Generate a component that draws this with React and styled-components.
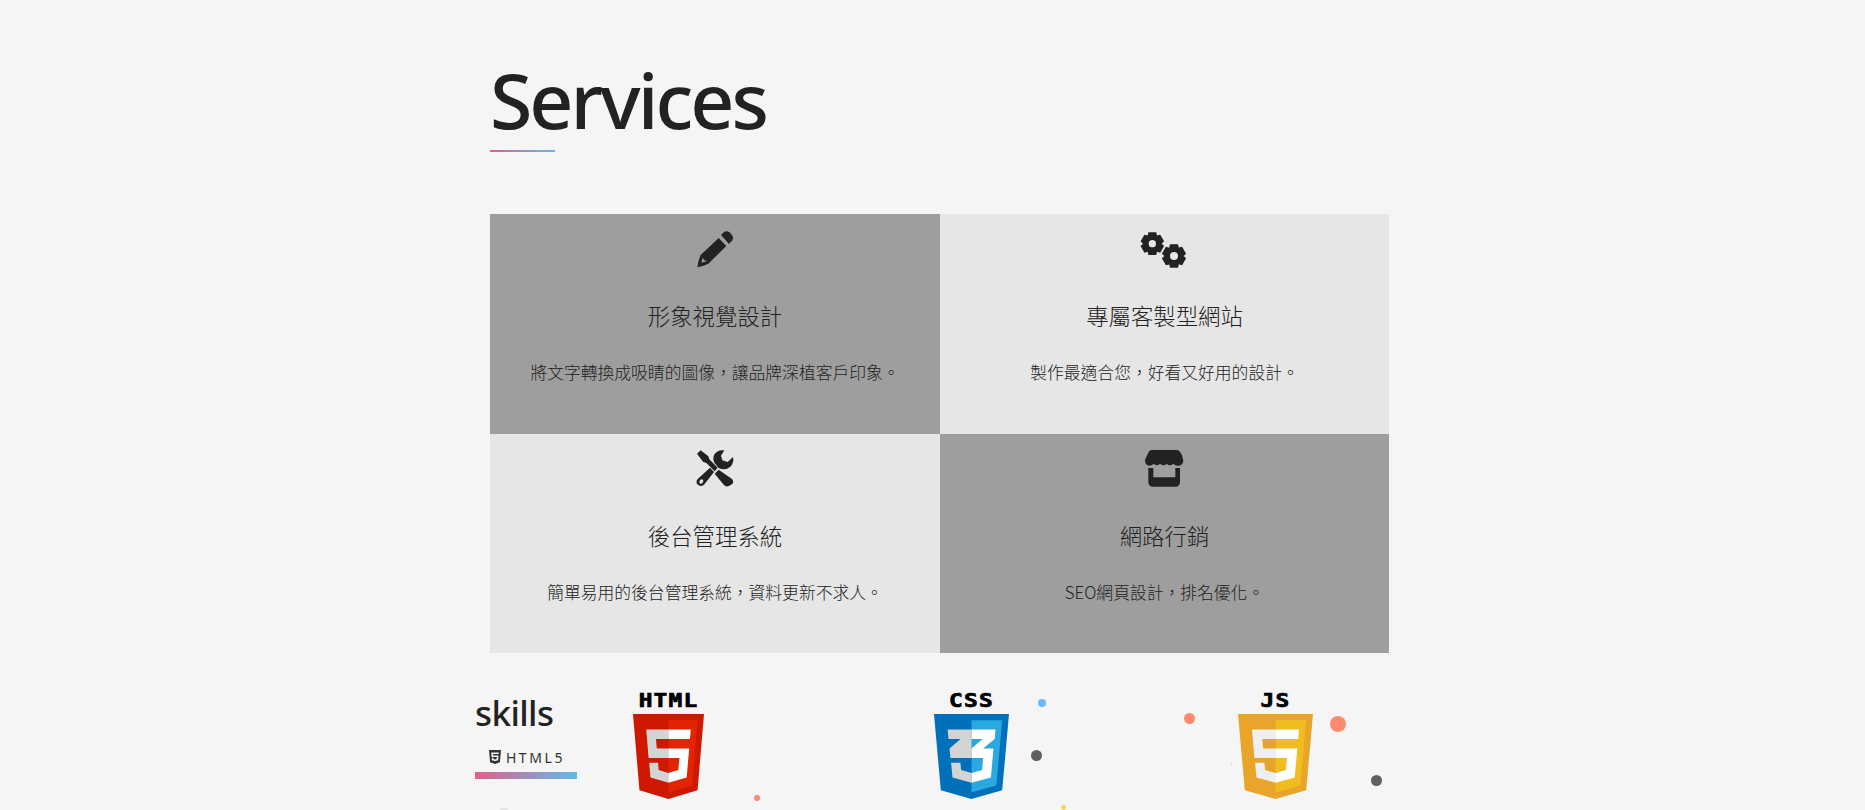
import React from "react";
import styled, { createGlobalStyle } from "styled-components";
import { FaHtml5 } from "react-icons/fa";

const Global = createGlobalStyle`
  html, body { margin: 0; padding: 0; height: 810px; overflow: hidden; background: #f5f5f5; }
  body { font-family: "Noto Sans", "Noto Sans CJK TC", sans-serif; color: #333; }
`;
const Page = styled.div`
  width: 899px;
  margin-left: 490px;
  padding-top: 55px;
`;
const Header = styled.header`
  height: 159px;
`;
const Title = styled.h1`
  margin: 0;
  font-family: "Noto Sans", sans-serif;
  font-weight: 500;
  font-size: 77px;
  letter-spacing: -3px;
  line-height: 90px;
  color: #222;
`;
const Underline = styled.div`
  width: 65px;
  height: 2px;
  margin-top: 5px;
  background: linear-gradient(90deg, #e05f8e, #60bbe6);
`;
const Grid = styled.section`
  display: grid;
  grid-template-columns: 450px 449px;
  grid-auto-rows: 219.5px;
`;
const Card = styled.article`
  display: flex;
  flex-direction: column;
  align-items: center;
  padding-top: 12px;
  box-sizing: border-box;
  background: ${(p) => (p.$dark ? "#9e9e9e" : "#e6e6e6")};
`;
const Icon = styled.svg`
  display: block;
  width: 60px;
  height: 45px;
  fill: #222;
`;
const CardTitle = styled.h3`
  margin: 28px 0 0;
  font-family: "Noto Sans CJK TC", sans-serif;
  font-weight: 300;
  font-size: 22.4px;
  line-height: 32px;
  color: #222;
`;
const CardText = styled.p`
  margin: 29px 0 0;
  font-family: "Noto Sans CJK TC", sans-serif;
  font-weight: 300;
  font-size: 16.8px;
  line-height: 24px;
  color: #222;
`;
const Skills = styled.section`
  position: relative;
  display: flex;
  align-items: flex-start;
  margin-left: -15px;
  padding-top: 40px;
  height: 116px;
  box-sizing: border-box;
`;
const Side = styled.div`
  width: 102px;
  margin-right: 56px;
`;
const SkillHead = styled.h2`
  margin: -3px 0 0 0;
  font-weight: 500;
  font-size: 35px;
  letter-spacing: -0.6px;
  line-height: 46px;
  color: #222;
`;
const TabLabel = styled.div`
  display: flex;
  align-items: center;
  justify-content: center;
  gap: 3px;
  margin-top: 11px;
  height: 20px;
  font-size: 14px;
  letter-spacing: 2.6px;
  color: #333;
`;
const TabBar = styled.div`
  height: 7px;
  margin-top: 5px;
  background: linear-gradient(90deg, #e05f8e, #60bbe6);
`;
const Logo = styled.div`
  width: ${(p) => p.$w}px;
  margin-right: ${(p) => p.$gap}px;
  flex: none;
`;
const LogoLabel = styled.div`
  height: 21px;
  text-align: center;
  font-family: "DejaVu Sans Mono", monospace;
  font-weight: 700;
  font-size: 19px;
  line-height: 15px;
  letter-spacing: 1px;
  color: #000;
  -webkit-text-stroke: 0.7px #000;
  transform: scaleX(1.2);
`;
const Shield = styled.svg`
  display: block;
  width: 100%;
  height: 85px;
`;
const Dot = styled.span`
  position: absolute;
  border-radius: 50%;
  left: ${(p) => p.$x - 475 - p.$r}px;
  top: ${(p) => p.$y - 653 - p.$r}px;
  width: ${(p) => p.$r * 2}px;
  height: ${(p) => p.$r * 2}px;
  background: ${(p) => p.$c};
`;

const gear = (cx, cy, R, r, hole) => {
  const pts = [];
  for (let i = 0; i < 6; i++) {
    const a = (i * Math.PI) / 3 - Math.PI / 2;
    const w = 0.33;
    const v = 0.52;
    pts.push([cx + R * Math.cos(a - w), cy + R * Math.sin(a - w)]);
    pts.push([cx + R * Math.cos(a + w), cy + R * Math.sin(a + w)]);
    pts.push([cx + r * Math.cos(a + v), cy + r * Math.sin(a + v)]);
  }
  let d = "M" + pts.map((p) => p[0].toFixed(1) + " " + p[1].toFixed(1)).join("L") + "Z";
  d += `M${cx + hole} ${cy}a${hole} ${hole} 0 1 0 ${-2 * hole} 0a${hole} ${hole} 0 1 0 ${2 * hole} 0Z`;
  return d;
};

const Pencil = () => (
  <Icon viewBox="135 48 180 135">
    <path d="M243 75L252 66Q260 61 268 67L276 75Q282 83 277 91L267 102Z" />
    <path fillRule="evenodd" d="M236 84L259 108L205 161Q190 168 172 172Q175 150 182 135ZM188 143Q186 152 184 158Q192 156 201 153L193 151Z" />
  </Icon>
);
const Gears = () => (
  <Icon viewBox="105 48 180 135">
    <path fillRule="evenodd" d={gear(157, 101, 36, 28, 11)} />
    <path fillRule="evenodd" d={gear(222, 138, 37, 29, 12)} />
  </Icon>
);
const Tools = () => (
  <Icon viewBox="135 18 180 135">
    <path d="M171 41L182 31L205 49L208 58L233 83L224 94L199 69L189 65Z" />
    <path d="M236 89L275 116Q283 124 277 132L265 139Q257 141 251 134L224 101Z" />
    <path fillRule="evenodd" d="M210 83L222 96L192 134Q182 143 172 133Q166 124 174 116ZM180 122a5 5 0 1 0 8 5a5 5 0 1 0 -8 -5Z" />
    <path d="M253 31Q232 28 222 45Q217 58 224 70L236 84Q255 93 271 80Q283 68 279 51L263 66L247 61L243 47Z" />
  </Icon>
);
const Store = () => (
  <Icon viewBox="105 18 180 135">
    <path d="M153 30H232Q240 32 246 46L250 62Q249 75 236 77Q226 78 220 71Q210 81 200 71Q192 81 180 71Q170 80 162 71Q155 78 145 77Q134 72 135 60L143 42Q147 32 153 30Z" />
    <path d="M145 84H160V112H226V84H240V125Q240 140 225 140H160Q145 140 145 125Z" />
  </Icon>
);

const HTML5Shield = ({ base, light, w1, w2 }) => (
  <Shield viewBox="30 0 451 512" preserveAspectRatio="none">
    <path fill={base} d="M71 460L30 0H481L440 460L255 512Z" />
    <path fill={light} d="M256 472L405 431L440 37H256Z" />
    <path fill={w1} d="M256 208H181L176 150H256V94H114L129 265H256ZM256 355L193 338L189 293H133L141 382L256 414Z" />
    <path fill={w2} d="M255 208V265H325L318 338L255 355V414L371 382L387 208ZM255 94V150H392L397 94Z" />
  </Shield>
);
const CSS3Shield = () => (
  <Shield viewBox="30 0 451 512" preserveAspectRatio="none">
    <path fill="#0170ba" d="M71 460L30 0H481L440 460L255 512Z" />
    <path fill="#29a9df" d="M256 472L405 431L440 37H256Z" />
    <path fill="#d4d4d4" d="M256 94H112L117 150H190L123 208L129 265H256ZM256 355L193 338L189 293H133L141 382L256 414Z" />
    <path fill="#fff" d="M256 94H400L395 150L325 208H388L372 382L256 414V355L319 338L325 265H256V208L322 150H256Z" />
  </Shield>
);

const cards = [
  { dark: true, I: Pencil, t: "形象視覺設計", p: "將文字轉換成吸睛的圖像，讓品牌深植客戶印象。" },
  { dark: false, I: Gears, t: "專屬客製型網站", p: "製作最適合您，好看又好用的設計。" },
  { dark: false, I: Tools, t: "後台管理系統", p: "簡單易用的後台管理系統，資料更新不求人。" },
  { dark: true, I: Store, t: "網路行銷", p: "SEO網頁設計，排名優化。" },
];
const dots = [
  [1042, 703, 4, "#6cb8ff"],
  [1036, 755, 5.5, "#5f5f5f"],
  [1063, 807, 2.5, "#ffcf5c"],
  [757, 798, 3, "#ff8a70"],
  [1189, 718, 5.5, "#ff8a70"],
  [1338, 724, 8, "#ff8a70"],
  [1376, 780, 5.5, "#5f5f5f"],
  [1231, 764, 0.5, "#5fd35f"],
  [504, 815, 7, "#e2e2e2"],
];

export default function App() {
  return (
    <>
      <Global />
      <Page>
        <Header>
          <Title>Services</Title>
          <Underline />
        </Header>
        <Grid>
          {cards.map(({ dark, I, t, p }) => (
            <Card key={t} $dark={dark}>
              <I />
              <CardTitle>{t}</CardTitle>
              <CardText>{p}</CardText>
            </Card>
          ))}
        </Grid>
        <Skills>
          <Side>
            <SkillHead>skills</SkillHead>
            <TabLabel>
              <FaHtml5 size={16} />
              HTML5
            </TabLabel>
            <TabBar />
          </Side>
          <Logo $w={71} $gap={230}>
            <LogoLabel>HTML</LogoLabel>
            <HTML5Shield base="#cf1800" light="#e32400" w1="#d4d4d4" w2="#fff" />
          </Logo>
          <Logo $w={75} $gap={229}>
            <LogoLabel>CSS</LogoLabel>
            <CSS3Shield />
          </Logo>
          <Logo $w={75} $gap={0}>
            <LogoLabel>JS</LogoLabel>
            <HTML5Shield base="#e8a52a" light="#f1bc1e" w1="#efeff1" w2="#fff" />
          </Logo>
          {dots.map(([x, y, r, c]) => (
            <Dot key={x} $x={x} $y={y} $r={r} $c={c} />
          ))}
        </Skills>
      </Page>
    </>
  );
}
